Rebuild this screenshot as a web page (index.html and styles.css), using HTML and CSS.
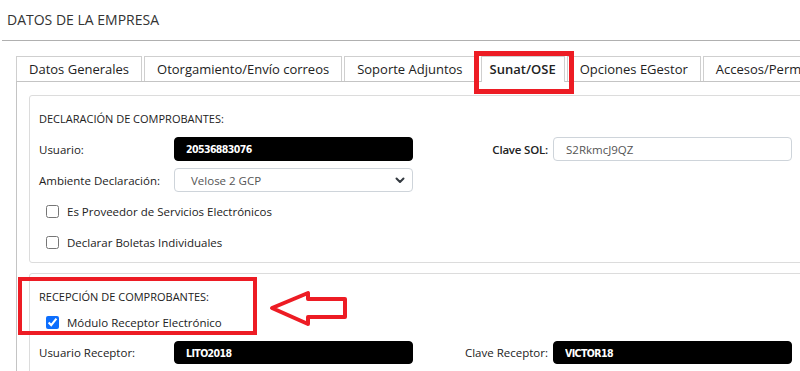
FILE: index.html
```html
<!DOCTYPE html>
<html lang="es">
<head>
  <meta charset="UTF-8">
  <meta name="viewport" content="width=device-width, initial-scale=1.0">
  <title>Datos de la empresa</title>
  <link rel="stylesheet" href="styles.css">
</head>
<body>
  <h1 class="page-title">DATOS DE LA EMPRESA</h1>

  <div class="tabs-area">
    <ul class="tabs">
      <li>Datos Generales</li>
      <li>Otorgamiento/Envío correos</li>
      <li>Soporte Adjuntos</li>
      <li class="active">Sunat/OSE</li>
      <li>Opciones EGestor</li>
      <li>Accesos/Permisos</li>
    </ul>

    <div class="tab-panel">
      <!-- declaracion -->
      <div class="group">
        <h2 class="group-title">DECLARACIÓN DE COMPROBANTES:</h2>
        <div class="form-grid">
          <label class="lbl">Usuario:</label>
          <input class="field field-dark" type="text" value="20536883076" readonly>
          <label class="lbl lbl-right lbl-strong">Clave SOL:</label>
          <input class="field" type="text" value="S2RkmcJ9QZ" readonly>

          <label class="lbl">Ambiente Declaración:</label>
          <div class="field select">
            <span>Velose 2 GCP</span>
            <svg width="10" height="7" viewBox="0 0 10 7"><path d="M1.5 1.5 L5 5 L8.5 1.5" fill="none" stroke="#343a40" stroke-width="2" stroke-linecap="round" stroke-linejoin="round"/></svg>
          </div>
        </div>
        <label class="check-row"><input type="checkbox"> Es Proveedor de Servicios Electrónicos</label>
        <label class="check-row check-last"><input type="checkbox"> Declarar Boletas Individuales</label>
      </div>

      <!-- recepcion -->
      <div class="group group-recep">
        <h2 class="group-title">RECEPCIÓN DE COMPROBANTES:</h2>
        <label class="check-row check-recep"><input type="checkbox" checked> Módulo Receptor Electrónico</label>
        <div class="form-grid grid-recep">
          <label class="lbl">Usuario Receptor:</label>
          <input class="field field-dark" type="text" value="LITO2018" readonly>
          <label class="lbl lbl-right">Clave Receptor:</label>
          <input class="field field-dark" type="text" value="VICTOR18" readonly>
        </div>

        <div class="mark-box"></div>
        <svg class="mark-arrow" width="84" height="42" viewBox="0 0 84 42">
          <polygon points="4,20 40,5 40,11 77,11 77,29 40,29 40,36" fill="none" stroke="#ed1c24" stroke-width="4" stroke-linejoin="round"/>
        </svg>
      </div>
    </div>
  </div>
</body>
</html>
```

FILE: styles.css
```css
*, *::before, *::after{
  box-sizing: border-box;
}

body{
  margin: 0;
  overflow: hidden;
  background: #fff;
  color: #222;
  font-family: "Open Sans", "Noto Sans", sans-serif;
}

.page-title{
  margin: 0 0 0 2px;
  height: 41px;
  padding: 11px 5px 0;
  font-size: 14px;
  font-weight: normal;
  line-height: 18px;
  color: #333;
  border-bottom: 1px solid #b0b0b0;
}

.tabs-area{
  margin-top: 15px;
  padding-left: 16px;
}

.tabs{
  margin: 0;
  padding: 0;
  list-style: none;
  display: flex;
  gap: 2px;
  white-space: nowrap;
}

.tabs li{
  height: 25px;
  padding: 0 12px;
  border: 1px solid #cfcfcf;
  border-bottom: none;
  font-size: 13px;
  line-height: 24px;
  color: #222;
  background: #fff;
}

.tabs li.active{
  position: relative;
  height: 26px;
  margin-bottom: -1px;
  margin-left: 3px;
  padding: 0 8px;
  font-weight: 600;
  z-index: 1;
}

.tabs li.active::after{
  content: "";
  position: absolute;
  left: -8px;
  top: -6px;
  width: 100px;
  height: 43px;
  border: 5px solid #ed1c24;
}

.tab-panel{
  border-top: 1px solid #c4c4c4;
  border-left: 1px solid #c4c4c4;
  padding: 13px 0 0 12px;
}

.group{
  position: relative;
  width: 820px;
  border: 1px solid #dcdcdc;
  border-radius: 3px;
  padding: 15px 0 9px 9px;
}

.group-recep{
  margin-top: 10px;
  padding-bottom: 20px;
}

.group-title{
  margin: 0 0 10px;
  font-size: 11px;
  font-weight: normal;
  line-height: 16px;
  color: #222;
}

.group-recep .group-title{
  margin-bottom: 6px;
}

.form-grid{
  display: grid;
  grid-template-columns: 135px 239px 140px 239px;
  grid-auto-rows: 24px;
  row-gap: 7px;
  align-items: center;
}

.grid-recep{
  margin-top: 8px;
  grid-auto-rows: 23px;
}

.lbl{
  font-size: 11.5px;
  color: #222;
}

.lbl-right{
  text-align: right;
  padding-right: 5px;
}

.lbl-strong{
  font-weight: 600;
  letter-spacing: -0.2px;
}

.field{
  height: 100%;
  width: 100%;
  margin: 0;
  border: 1px solid #ced4da;
  border-radius: 4px;
  padding: 0 12px;
  background: #fff;
  font-family: "Open Sans", "Noto Sans", sans-serif;
  font-size: 11.5px;
  color: #555;
  outline: none;
}

.field-dark{
  background: #000;
  border-color: #000;
  color: #fff;
  padding-left: 11px;
  font-family: "DejaVu Sans Condensed", "DejaVu Sans", sans-serif;
  font-weight: bold;
  font-size: 10.5px;
  letter-spacing: -0.6px;
}

.select{
  display: flex;
  align-items: center;
  justify-content: space-between;
  padding: 0 7px 0 16px;
}

.check-row{
  display: flex;
  align-items: center;
  gap: 8px;
  height: 22px;
  margin-top: 8px;
  padding-left: 7px;
  font-size: 11.5px;
  color: #222;
}

.check-last{
  margin-top: 9px;
}

.check-recep{
  margin-top: 0;
}

.check-row input{
  width: 13px;
  height: 13px;
  margin: 0;
  accent-color: #0d6efd;
}

.mark-box{
  position: absolute;
  left: -12px;
  top: 3px;
  width: 239px;
  height: 58px;
  border: 4px solid #ed1c24;
}

.mark-arrow{
  position: absolute;
  left: 238px;
  top: 14px;
}
```
